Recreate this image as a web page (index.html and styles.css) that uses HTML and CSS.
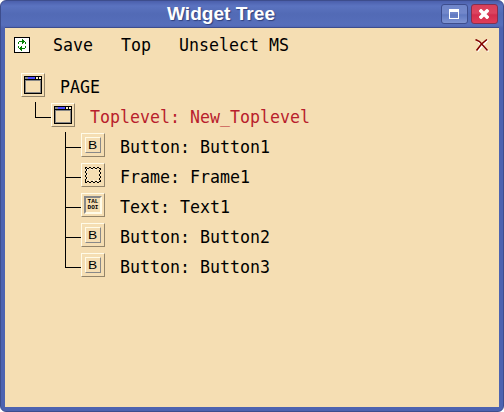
FILE: index.html
```html
<!DOCTYPE html>
<html lang="en">
<head>
<meta charset="utf-8">
<title>Widget Tree</title>
<link rel="stylesheet" href="styles.css">
</head>
<body>
<div class="window">
  <header class="titlebar">
    <h1>Widget Tree</h1>
    <div class="controls">
      <button class="control" aria-label="Maximize"><svg width="10" height="10" viewBox="0 0 10 10"><path fill="#fff" fill-rule="evenodd" d="M0 0h10v10H0zM1 3v6h8V3z"/></svg></button>
      <button class="control close" aria-label="Close"><svg width="10" height="10" viewBox="0 0 10 10"><path d="M2 2l6 6M8 2l-6 6" stroke="#fff" stroke-width="3.6" stroke-linecap="square"/></svg></button>
    </div>
  </header>
  <main class="content">
    <nav class="toolbar">
      <svg class="refresh" width="16" height="16" viewBox="0 0 16 16" shape-rendering="crispEdges">
        <path fill="#000" d="M0 0h16v16H0z"/><path fill="#fff" d="M1 1h14v14H1z"/>
        <path fill="#008000" d="M8 2h1v1h1v1h1v1h-1v1H9v1H8V5H5V4h3zM4 5h1v2H4zM11 5h1v2h-1zM8 9h-1v1H6v1H5v1h1v1h1v1h1v-2h3v-1H8zM11 9h1v2h-1zM4 9h1v2H4z"/>
      </svg>
      <span class="item save"><span class="label">Save</span></span>
      <span class="item top"><span class="label">Top</span></span>
      <span class="item"><span class="label">Unselect MS</span></span>
      <svg class="dismiss" width="14" height="13" viewBox="0 0 14 13"><path d="M2 1.5l11.5 11M13 1L2.5 12.5" stroke="#fff" stroke-width="1.3"/><path d="M0.5 0.5l4 2L12.5 11.5M12 0.5L6.5 5 1.5 11.5" fill="none" stroke="#800000" stroke-width="1.5"/></svg>
    </nav>
    <ul class="tree">
      <li class="row"><span class="icon"><svg viewBox="0 0 18 18"><path fill="#000" d="M0 0h18v18H0z"/><path fill="#888" d="M1 1h3v2H1zM1 4h16v13H1z"/><path fill="#4b4bff" d="M4 1h7v2H4z"/><path fill="#fff0cc" d="M12 1h2v2h-2zM15 1h2v2h-2z"/><path fill="#f5deb3" d="M2 5h14v11H2z"/></svg></span><span class="label">PAGE</span></li>
      <li class="row level-1 selected"><i class="branch first last"></i><span class="icon"><svg viewBox="0 0 18 18"><path fill="#000" d="M0 0h18v18H0z"/><path fill="#888" d="M1 1h3v2H1zM1 4h16v13H1z"/><path fill="#4b4bff" d="M4 1h7v2H4z"/><path fill="#fff0cc" d="M12 1h2v2h-2zM15 1h2v2h-2z"/><path fill="#f5deb3" d="M2 5h14v11H2z"/></svg></span><span class="label">Toplevel: New_Toplevel</span></li>
      <li class="row level-2"><i class="branch first"></i><span class="icon"><span class="mini-button"><b>B</b></span></span><span class="label">Button: Button1</span></li>
      <li class="row level-2"><i class="branch"></i><span class="icon"><svg viewBox="0 0 18 18"><path d="M3 3.5h12v11H3.5V3" fill="none" stroke="#fff" stroke-dasharray="1 3"/><path fill="#000" d="M1 1h2v1H1zM5 1h2v1H5zM9 1h2v1H9zM13 1h2v1h-2zM3 2h2v1H3zM7 2h2v1H7zM11 2h2v1h-2zM15 2h2v1h-2zM1 16h2v1H1zM5 16h2v1H5zM9 16h2v1H9zM13 16h2v1h-2zM3 15h2v1H3zM7 15h2v1H7zM11 15h2v1h-2zM15 15h2v1h-2zM1 2h1v1H1zM2 3h1v2H2zM1 5h1v2H1zM2 7h1v2H2zM1 9h1v2H1zM2 11h1v2H2zM1 13h1v3H1zM16 3h1v1h-1zM15 4h1v2h-1zM16 6h1v2h-1zM15 8h1v2h-1zM16 10h1v2h-1zM15 12h1v2h-1zM16 14h1v2h-1z"/></svg></span><span class="label">Frame: Frame1</span></li>
      <li class="row level-2"><i class="branch"></i><span class="icon"><span class="mini-text"><span>TAL</span><span>DOI</span></span></span><span class="label">Text: Text1</span></li>
      <li class="row level-2"><i class="branch"></i><span class="icon"><span class="mini-button"><b>B</b></span></span><span class="label">Button: Button2</span></li>
      <li class="row level-2"><i class="branch last"></i><span class="icon"><span class="mini-button"><b>B</b></span></span><span class="label">Button: Button3</span></li>
    </ul>
  </main>
</div>
</body>
</html>
```
FILE: styles.css
```css
* { box-sizing: border-box; }
html { background: #fff; }
body { margin: 0; }
.window {
  width: 504px; height: 412px; padding: 0 4px 4px;
  border: 1px solid #3d4d8d; border-radius: 6px;
  background: linear-gradient(#4b5fac 0, #5b73c0 5px, #526ab5 13px, #566ebb 24px, #4d63b0 27px, #4d63b0 100%);
  overflow: hidden;
}
.titlebar { position: relative; height: 27px; border-bottom: 1px solid #3d4d8d; }
h1 {
  margin: 0; padding-right: 62px; text-align: center;
  font: bold 19.1px/26px "Liberation Sans", sans-serif;
  color: #fff; text-shadow: 1px 1px 1px #30407c;
}
.controls { position: absolute; right: 1px; top: 3px; display: flex; gap: 3px; }
.control {
  display: flex; align-items: center; justify-content: center;
  width: 27px; height: 20px; padding: 0 1px 0 0;
  border: 1px solid #3d4d8d; border-radius: 3px;
  background: linear-gradient(#6f85c9, #7388cb 45%, #6079c1 55%, #7f94d3);
}
.close { background: linear-gradient(#d9405a, #dc4560 45%, #d32e4d 55%, #e03d58); border-color: #84304f; }
.content { height: 379px; background: #f5deb3; color: #000; font: 17.6px/30px "DejaVu Sans Mono", monospace; }
.toolbar { display: flex; align-items: center; height: 34px; padding: 0 10px 0 9px; }
.refresh { margin-right: 23px; }
.item { width: 110px; white-space: pre; }
.item.save { width: 68px; }
.item.top { width: 58px; }
.label { display: inline-block; transform: scaleX(.9438); transform-origin: 0 50%; }
.dismiss { margin-left: auto; }
.tree { list-style: none; margin: 0; padding: 8px 0 0 16px; }
.row { display: flex; align-items: center; height: 30px; white-space: pre; }
.row .label { padding-top: 4px; line-height: 26px; height: 30px; }
.level-1 { padding-left: 14px; }
.level-2 { padding-left: 44px; }
.selected { color: #b8202c; }
.icon {
  flex: none; width: 24px; height: 24px; margin-right: 15px; padding: 2px;
  border: 1px solid; border-color: #fffbe8 #93856b #93856b #fffbe8;
  color: #000;
}
.icon svg { display: block; width: 18px; height: 18px; shape-rendering: crispEdges; }
.mini-button {
  display: flex; align-items: center; justify-content: center;
  width: 16px; height: 16px; margin: 1px;
  border: 1px solid; border-color: #fffbe8 #888 #888 #fffbe8;
}
.mini-button b { font: 11px/14px "Liberation Sans", sans-serif; transform: scaleX(1.25); }
.mini-text {
  display: flex; flex-direction: column; align-items: center;
  width: 18px; height: 18px; padding: 1px 0 0;
  border: 2px solid; border-color: #888 #fffbe8 #fffbe8 #888;
  font: bold 6px/6px "Liberation Mono", monospace;
}
.branch {
  align-self: flex-start; width: 16px; height: 30px; border-left: 1px solid #000;
  background: linear-gradient(#000, #000) 0 17px / 15px 1px no-repeat;
}
.branch.first { height: 28px; margin-top: 2px; background-position: 0 15px; }
.branch.last { height: 18px; }
.branch.first.last { height: 16px; }
```
